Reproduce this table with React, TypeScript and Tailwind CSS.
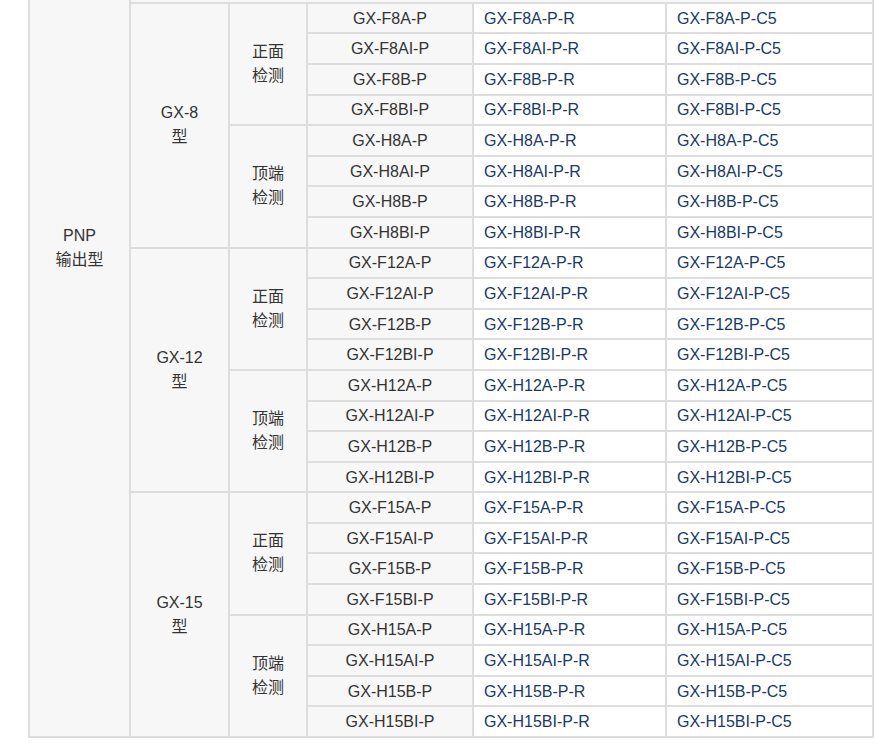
import React from 'react';

const SIZES = ['8', '12', '15'];
const KINDS = [
  { prefix: 'F', label: ['正面', '检测'] },
  { prefix: 'H', label: ['顶端', '检测'] },
];
const SUFFIXES = ['A', 'AI', 'B', 'BI'];

const buildRows = () => {
  const rows: { model: string; size: string; ki: number; ri: number }[] = [];
  SIZES.forEach((size) => {
    KINDS.forEach((k, ki) => {
      SUFFIXES.forEach((suf, ri) => {
        rows.push({ model: `GX-${k.prefix}${size}${suf}-P`, size, ki, ri });
      });
    });
  });
  return rows;
};

const cell = 'border border-[#dddddd] align-middle';
const grayCell = `${cell} bg-[#f7f7f7] text-center text-[#333333]`;
const linkCell = `${cell} bg-white text-left pl-[10px] text-[#18396a]`;

function App() {
  const rows = buildRows();

  return (
    <div className="h-[749px] w-[890px] overflow-hidden bg-white font-['Liberation_Sans','Noto_Sans_CJK_SC',sans-serif] text-[16px] leading-[24px]">
      {/* page is scrolled: the PNP block starts above the viewport (GX-5 group off screen) */}
      <table className="-mt-[243px] ml-[28px] w-[846px] table-fixed border-separate border-spacing-0 border border-[#dddddd]">
        <colgroup>
          <col className="w-[101px]" />
          <col className="w-[99px]" />
          <col className="w-[78px]" />
          <col className="w-[166px]" />
          <col className="w-[193px]" />
          <col className="w-[207px]" />
        </colgroup>
        <tbody>
          <tr className="h-[244.8px]">
            <td rowSpan={rows.length + 1} className={grayCell}>
              PNP
              <br />
              输出型
            </td>
            <td colSpan={5} className={`${cell} bg-[#f7f7f7]`} />
          </tr>
          {rows.map((r) => (
            <tr key={r.model} className="h-[30.6px]">
              {r.ki === 0 && r.ri === 0 && (
                <td rowSpan={8} className={grayCell}>
                  GX-{r.size}
                  <br />型
                </td>
              )}
              {r.ri === 0 && (
                <td rowSpan={4} className={grayCell}>
                  {KINDS[r.ki].label[0]}
                  <br />
                  {KINDS[r.ki].label[1]}
                </td>
              )}
              <td className={`${grayCell} pt-px pb-0`}>{r.model}</td>
              <td className={`${linkCell} pt-px pb-0`}>{r.model}-R</td>
              <td className={`${linkCell} pt-px pb-0`}>{r.model}-C5</td>
            </tr>
          ))}
        </tbody>
      </table>
    </div>
  );
}

export default App;
